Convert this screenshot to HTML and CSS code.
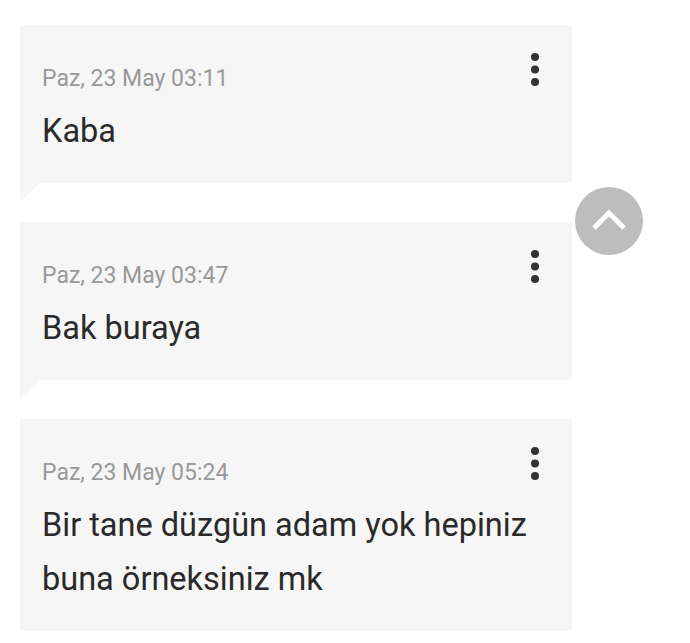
FILE: index.html
```html
<!DOCTYPE html>
<html lang="tr">
<head>
    <meta charset="UTF-8">
    <meta name="viewport" content="width=device-width, initial-scale=1.0">
    <title>Mesajlar</title>
    <link rel="stylesheet" href="styles.css">
</head>
<body>
    <div class="container">
        <div class="message">
            <div class="message-head">
                <span class="message-date">Paz, 23 May 03:11</span>
                <button class="menu-btn" aria-label="Menü">
                    <svg width="8" height="33" viewBox="0 0 8 33"><circle cx="4" cy="4" r="4"/><circle cx="4" cy="16.5" r="4"/><circle cx="4" cy="29" r="4"/></svg>
                </button>
            </div>
            <p class="message-text">Kaba</p>
        </div>

        <div class="message">
            <div class="message-head">
                <span class="message-date">Paz, 23 May 03:47</span>
                <button class="menu-btn" aria-label="Menü">
                    <svg width="8" height="33" viewBox="0 0 8 33"><circle cx="4" cy="4" r="4"/><circle cx="4" cy="16.5" r="4"/><circle cx="4" cy="29" r="4"/></svg>
                </button>
            </div>
            <p class="message-text">Bak buraya</p>
        </div>

        <div class="message">
            <div class="message-head">
                <span class="message-date">Paz, 23 May 05:24</span>
                <button class="menu-btn" aria-label="Menü">
                    <svg width="8" height="33" viewBox="0 0 8 33"><circle cx="4" cy="4" r="4"/><circle cx="4" cy="16.5" r="4"/><circle cx="4" cy="29" r="4"/></svg>
                </button>
            </div>
            <p class="message-text">Bir tane düzgün adam yok hepiniz buna örneksiniz mk</p>
        </div>
    </div>

    <!-- yukarı çık butonu -->
    <button class="scroll-top" aria-label="Yukarı">
        <svg width="68" height="68" viewBox="0 0 68 68"><polyline points="19,41 34,26 49,41" fill="none" stroke="#fff" stroke-width="5"/></svg>
    </button>
</body>
</html>
```

FILE: styles.css
```css
body {
    font-family: 'Roboto', 'Noto Sans', sans-serif;
    margin: 0;
    padding: 0;
    background: #fff;
    color: #262626;
}
.container {
    width: 552px;
    padding: 25px 0 0 20px;
    display: flex;
    flex-direction: column;
    gap: 39px;
}
.message {
    position: relative;
    background-color: #f6f6f6;
    padding: 28px 33px 25px 22px;
}
.message::after {
    content: "";
    position: absolute;
    top: 100%;
    left: 0;
    border-top: 19px solid #f6f6f6;
    border-right: 20px solid transparent;
}
.message-head {
    display: flex;
    justify-content: space-between;
    align-items: flex-start;
}
.message-date {
    display: block;
    margin-top: 11px;
    font-size: 23px;
    line-height: 30px;
    color: #999;
}
.menu-btn {
    background: none;
    border: none;
    padding: 0;
    cursor: pointer;
    display: block;
}
.menu-btn svg {
    display: block;
    fill: #333;
}
.message-text {
    margin: 10px 0 0;
    font-size: 32.5px;
    line-height: 54px;
    color: #2a2a2a;
}
.scroll-top {
    position: fixed;
    left: 575px;
    top: 187px;
    width: 68px;
    height: 68px;
    padding: 0;
    border: none;
    border-radius: 50%;
    background-color: #bdbdbd;
    cursor: pointer;
}
.scroll-top svg {
    display: block;
}
```
